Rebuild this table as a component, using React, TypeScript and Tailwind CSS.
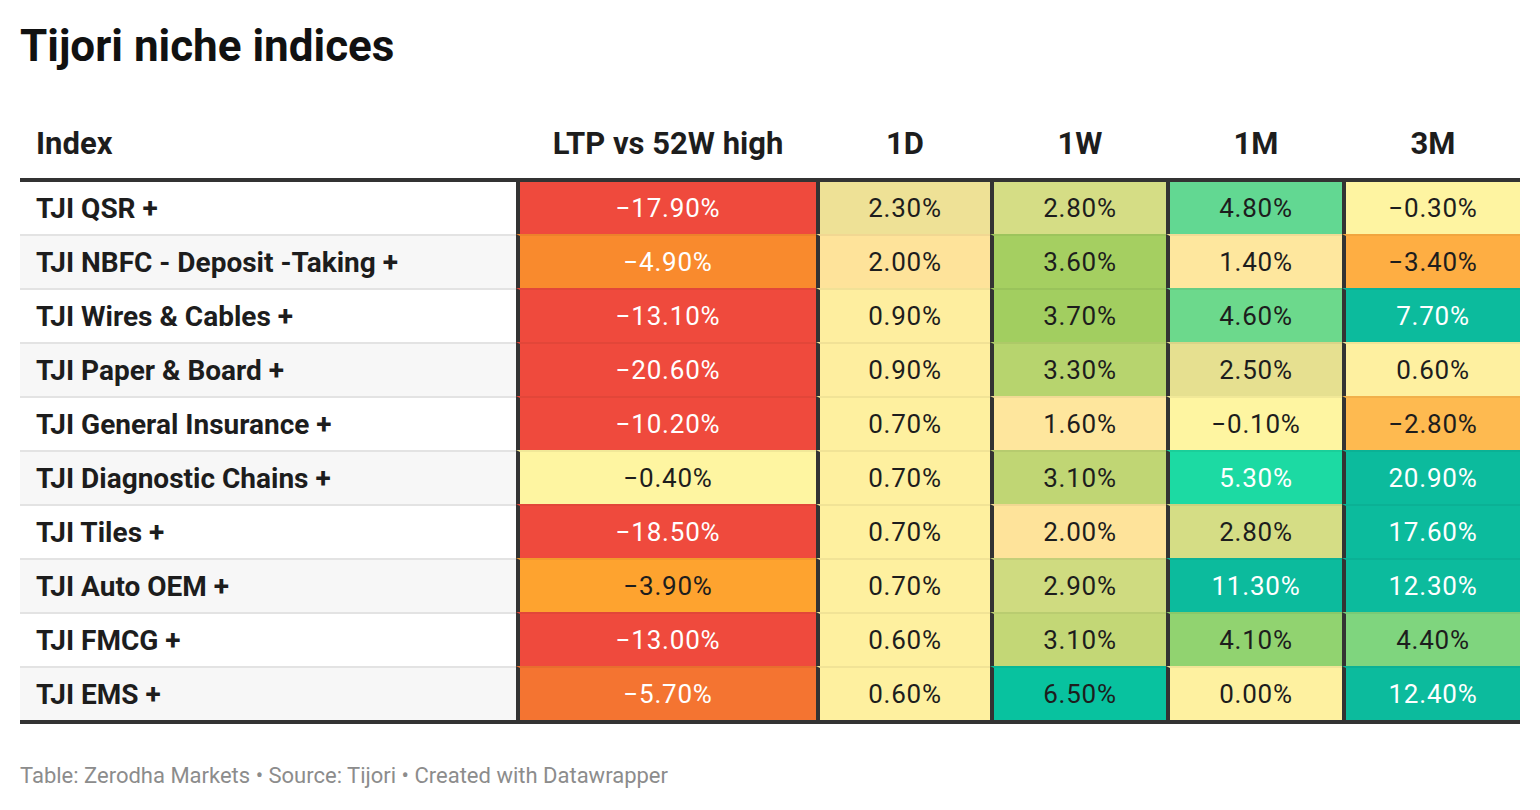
import React from "react";

type Cell = { v: string; c: string };
type Row = { name: string; cells: Cell[] };

const RED = "bg-[#ef4a3d] text-white";
const TEAL = "bg-[#0cbb9d] text-white";

const rows: Row[] = [
  {
    name: "TJI QSR +",
    cells: [
      { v: "−17.90%", c: RED },
      { v: "2.30%", c: "bg-[#eee196]" },
      { v: "2.80%", c: "bg-[#d5dd85]" },
      { v: "4.80%", c: "bg-[#62d892]" },
      { v: "−0.30%", c: "bg-[#fef4a1]" },
    ],
  },
  {
    name: "TJI NBFC - Deposit -Taking +",
    cells: [
      { v: "−4.90%", c: "bg-[#f98a2d] text-white" },
      { v: "2.00%", c: "bg-[#fee39a]" },
      { v: "3.60%", c: "bg-[#a5cf61]" },
      { v: "1.40%", c: "bg-[#fee79e]" },
      { v: "−3.40%", c: "bg-[#feae43]" },
    ],
  },
  {
    name: "TJI Wires & Cables +",
    cells: [
      { v: "−13.10%", c: RED },
      { v: "0.90%", c: "bg-[#feee9f]" },
      { v: "3.70%", c: "bg-[#a2ce60]" },
      { v: "4.60%", c: "bg-[#6cd98c]" },
      { v: "7.70%", c: TEAL },
    ],
  },
  {
    name: "TJI Paper & Board +",
    cells: [
      { v: "−20.60%", c: RED },
      { v: "0.90%", c: "bg-[#feee9f]" },
      { v: "3.30%", c: "bg-[#b7d46e]" },
      { v: "2.50%", c: "bg-[#e6e090]" },
      { v: "0.60%", c: "bg-[#fef0a0]" },
    ],
  },
  {
    name: "TJI General Insurance +",
    cells: [
      { v: "−10.20%", c: RED },
      { v: "0.70%", c: "bg-[#fef09f]" },
      { v: "1.60%", c: "bg-[#fee69d]" },
      { v: "−0.10%", c: "bg-[#fef5a1]" },
      { v: "−2.80%", c: "bg-[#feba50]" },
    ],
  },
  {
    name: "TJI Diagnostic Chains +",
    cells: [
      { v: "−0.40%", c: "bg-[#fef5a1]" },
      { v: "0.70%", c: "bg-[#fef09f]" },
      { v: "3.10%", c: "bg-[#c0d674]" },
      { v: "5.30%", c: "bg-[#1cdaa3] text-white" },
      { v: "20.90%", c: TEAL },
    ],
  },
  {
    name: "TJI Tiles +",
    cells: [
      { v: "−18.50%", c: RED },
      { v: "0.70%", c: "bg-[#fef09f]" },
      { v: "2.00%", c: "bg-[#fee39a]" },
      { v: "2.80%", c: "bg-[#d5dd85]" },
      { v: "17.60%", c: TEAL },
    ],
  },
  {
    name: "TJI Auto OEM +",
    cells: [
      { v: "−3.90%", c: "bg-[#fea32f]" },
      { v: "0.70%", c: "bg-[#fef09f]" },
      { v: "2.90%", c: "bg-[#cfdb80]" },
      { v: "11.30%", c: TEAL },
      { v: "12.30%", c: TEAL },
    ],
  },
  {
    name: "TJI FMCG +",
    cells: [
      { v: "−13.00%", c: RED },
      { v: "0.60%", c: "bg-[#fef09f]" },
      { v: "3.10%", c: "bg-[#c3d776]" },
      { v: "4.10%", c: "bg-[#91d370]" },
      { v: "4.40%", c: "bg-[#7fd57e]" },
    ],
  },
  {
    name: "TJI EMS +",
    cells: [
      { v: "−5.70%", c: "bg-[#f47431] text-white" },
      { v: "0.60%", c: "bg-[#fef09f]" },
      { v: "6.50%", c: "bg-[#08c29f]" },
      { v: "0.00%", c: "bg-[#fef1a0]" },
      { v: "12.40%", c: TEAL },
    ],
  },
];

// value column widths incl. the 4px dark left border
const widths = ["w-[300px]", "w-[174px]", "w-[176px]", "w-[176px]", "w-[178px]"];
const heads = ["LTP vs 52W high", "1D", "1W", "1M", "3M"];

export default function App() {
  return (
    <div className="w-[1540px] h-[810px] bg-white font-['Roboto',sans-serif] text-[#1d1d1d] pt-5 px-5">
      <h1 className="text-[44px] leading-[52px] font-bold text-[#111]">Tijori niche indices</h1>

      {/* header */}
      <div className="flex h-[106px] items-end pb-4 text-[31px] leading-[36px] font-bold">
        <div className="w-[496px] pl-4">Index</div>
        {heads.map((h, i) => (
          <div key={h} className={`${widths[i]} text-center pl-1`}>
            {h}
          </div>
        ))}
      </div>

      {/* body */}
      <div className="border-y-4 border-[#333] w-[1500px]">
        {rows.map((r, ri) => (
          <div key={r.name} className={`flex ${ri === 0 ? "h-[52px]" : "h-[54px]"}`}>
            <div
              className={`w-[496px] flex items-center pl-4 pt-px text-[28px] font-bold ${
                ri % 2 === 1 ? "bg-[#f7f7f7]" : "bg-white"
              } ${ri === 0 ? "" : "border-t-2 border-t-[#e3e3e3]"}`}
            >
              {r.name}
            </div>
            {r.cells.map((c, ci) => (
              <div
                key={ci}
                className={`${widths[ci]} ${c.c} flex items-center justify-center pt-px border-l-4 border-l-[#333] text-[26px] tracking-[0.8px] ${
                  ri === 0 ? "" : "border-t-2 border-t-black/5"
                }`}
              >
                {c.v}
              </div>
            ))}
          </div>
        ))}
      </div>

      <div className="mt-[38px] text-[22px] leading-[28px] text-[#8c8c8c]">
        Table: Zerodha Markets • Source: Tijori • Created with Datawrapper
      </div>
    </div>
  );
}
